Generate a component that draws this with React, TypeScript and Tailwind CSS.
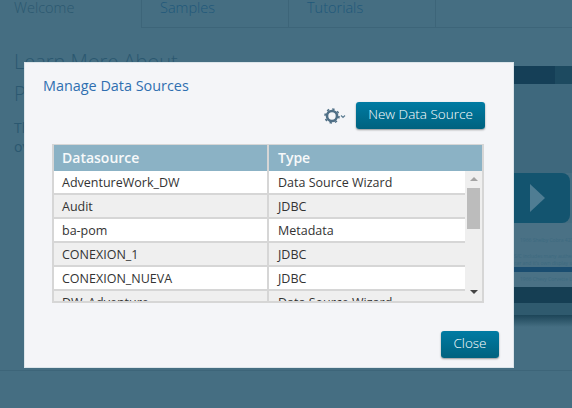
const rows = [
  ['AdventureWork_DW', 'Data Source Wizard'],
  ['Audit', 'JDBC'],
  ['ba-pom', 'Metadata'],
  ['CONEXION_1', 'JDBC'],
  ['CONEXION_NUEVA', 'JDBC'],
  ['DW_Adventure', 'Data Source Wizard'],
];

function GearIcon() {
  return (
    <svg width="24" height="18" viewBox="0 0 24 18">
      <circle cx="8" cy="9" r="5" fill="none" stroke="#4f6f86" strokeWidth="2.6" />
      <circle cx="8" cy="9" r="7" fill="none" stroke="#4f6f86" strokeWidth="1.6" strokeDasharray="2.4 3.1" />
      <path d="M17 8.5l2 2 2-2" fill="none" stroke="#5f7f94" strokeWidth="1.2" />
    </svg>
  );
}

function Background() {
  return (
    <div className="h-[408px] w-[572px] bg-[#456e82] text-[#2b5870] flex flex-col overflow-hidden">
      <div className="h-[28px] flex shrink-0 text-[14.5px] font-light leading-[15px]">
        <div className="w-[141px] pl-[14px]">Welcome</div>
        <div className="w-[148px] pl-[18px] border-l border-r border-b border-[#3d6579] text-[#1f587a]">Samples</div>
        <div className="w-[147px] pl-[18px] border-r border-b border-[#3d6579] text-[#1f587a]">Tutorials</div>
        <div className="flex-1 border-b border-[#3d6579]" />
      </div>
      <div className="flex-1 flex">
        <div className="w-[514px] pl-[14px] pt-[18px]">
          <div className="text-xl leading-[32px] font-light">Learn More About</div>
          <div className="text-xl leading-[32px] font-light">Pentaho</div>
          <div className="mt-[8px] text-sm leading-[19px]">The</div>
          <div className="text-sm leading-[19px]">ov</div>
        </div>
        <div className="flex-1 flex flex-col mt-[38px] overflow-hidden">
          <div className="h-[18px] flex shrink-0">
            <div className="w-[41px] bg-[#153f57]" />
            <div className="flex-1 bg-[#1d4a60]" />
          </div>
          <div className="h-[89px] bg-[#3e687d] shrink-0" />
          <div className="h-[50px] w-[56px] bg-[#13546f] rounded-r-lg flex items-center pl-[16px] shrink-0">
            <div className="h-0 w-0 border-y-[14px] border-y-transparent border-l-[15px] border-l-[#4f7d93]" />
          </div>
          <div className="h-[44px] bg-[#4a7185] shrink-0 text-[5px] leading-[7px] text-[#3d6a80] whitespace-nowrap overflow-hidden pl-[6px] pt-[14px]">
            <div>1966 Shelby Cobra 427 S/C</div>
            <div className="mt-[9px] -ml-[6px]">S/C includes many authentic details</div>
            <div className="-ml-[6px]">car and it's own display stand.</div>
          </div>
          <div className="h-[5px] bg-[#1a4d70] shrink-0" />
          <div className="h-[15px] bg-[#4a7185] shrink-0 text-[5px] leading-[15px] text-[#3d6a80] whitespace-nowrap overflow-hidden pl-[6px]">1966 Chevy Corvette Limited Edition</div>
          <div className="h-[16px] bg-[#153e53] shrink-0" />
          <div className="h-[12px] bg-[#2f5a6e] shrink-0" />
          <div className="h-[12px] bg-gradient-to-b from-[#1c4558] to-[#456e82] shrink-0" />
        </div>
      </div>
      <div className="h-[38px] border-t border-[#3d6579] shrink-0" />
    </div>
  );
}

export default function App() {
  return (
    <div className="relative h-[408px] w-[572px] overflow-hidden font-['Open_Sans',sans-serif]">
      <Background />
      <div className="absolute left-[24px] top-[62px] w-[490px] h-[306px] bg-[#f4f5f8] border border-[#dce5ea] flex flex-col">
        <div className="pl-[18px] pt-[13px] text-[14.4px] leading-[20px] text-[#2f6fb0]">Manage Data Sources</div>
        <div className="flex items-center justify-end mt-[6px] pr-[28px] gap-[8px]">
          <GearIcon />
          <button className="h-[27px] w-[129px] pb-[2px] rounded-[3px] bg-gradient-to-b from-[#007ba3] to-[#00627f] shadow-[0_1px_2px_rgba(0,0,0,0.4)] text-[13.5px] font-light text-white">New Data Source</button>
        </div>
        <div className="ml-[27px] mt-[15px] w-[432px] h-[159px] border-2 border-t border-[#d6d6d6] flex flex-col overflow-hidden">
          <div className="h-[26px] bg-[#8bb2c5] flex shrink-0 text-sm font-semibold text-[#f7f9fa]">
            <div className="w-[215px] pl-[8px] leading-[26px] border-r-2 border-[#d6d6d6]">Datasource</div>
            <div className="pl-[9px] leading-[26px]">Type</div>
          </div>
          <div className="flex-1 flex overflow-hidden">
            <div className="flex-1 overflow-hidden">
              {rows.map((r, i) => (
                <div key={r[0]} className={`h-[24px] flex border-b-2 border-[#d6d6d6] text-[12.5px] leading-[24px] text-[#333] ${i % 2 === 0 ? 'bg-white' : 'bg-[#efefef]'}`}>
                  <div className="w-[215px] pl-[8px] border-r-2 border-[#d6d6d6]">{r[0]}</div>
                  <div className="pl-[9px]">{r[1]}</div>
                </div>
              ))}
            </div>
            <div className="w-[17px] bg-[#efefef] flex flex-col items-center shrink-0">
              <div className="mt-[6px] h-0 w-0 border-x-[4px] border-x-transparent border-b-[4px] border-b-[#a3a3a3]" />
              <div className="mt-[7px] w-[13px] h-[41px] bg-[#bcbcbc]" />
              <div className="mt-auto mb-[7px] h-0 w-0 border-x-[4px] border-x-transparent border-t-[4px] border-t-[#444]" />
            </div>
          </div>
        </div>
        <div className="flex justify-end pr-[14px] mt-[28px]">
          <button className="h-[27px] w-[58px] pb-[2px] rounded-[3px] bg-gradient-to-b from-[#007ba3] to-[#00627f] shadow-[0_1px_2px_rgba(0,0,0,0.4)] text-[13.5px] font-light text-white">Close</button>
        </div>
      </div>
    </div>
  );
}
